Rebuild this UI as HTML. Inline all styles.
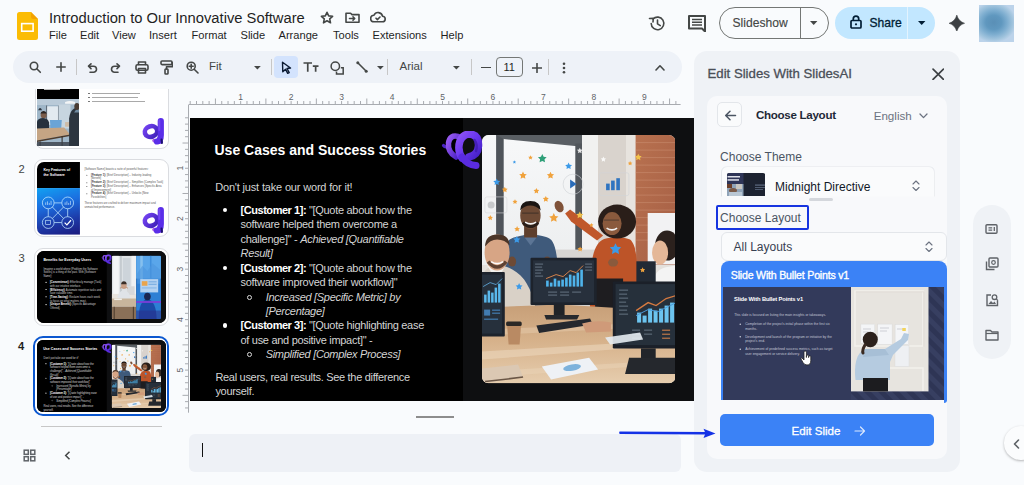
<!DOCTYPE html>
<html><head><meta charset="utf-8">
<style>
*{margin:0;padding:0;box-sizing:border-box}
html,body{width:1024px;height:485px;overflow:hidden;background:#f9fbfd;font-family:"Liberation Sans",sans-serif;color:#1f1f1f}
.a{position:absolute}
.t{position:absolute;white-space:nowrap;line-height:1}
svg{display:block;position:absolute}
.ic{stroke:#444746;fill:none;stroke-width:1.6;stroke-linecap:round;stroke-linejoin:round}
</style></head><body>
<!-- ===== TOP BAR ===== -->
<svg style="left:17px;top:12px" width="21" height="28" viewBox="0 0 21 28">
  <path d="M2.5 0H14L21 7V25.5A2.5 2.5 0 0 1 18.5 28H2.5A2.5 2.5 0 0 1 0 25.5V2.5A2.5 2.5 0 0 1 2.5 0Z" fill="#fbbc04"/>
  <path d="M14 0L21 7H16A2 2 0 0 1 14 5Z" fill="#f29900" opacity=".75"/>
  <rect x="4.7" y="11.6" width="11.4" height="7.6" fill="none" stroke="#fff" stroke-width="1.6"/>
</svg>
<div class="t" id="title" style="left:49px;top:10.5px;font-size:14.75px;color:#1f1f1f">Introduction to Our Innovative Software</div>
<div class="t" style="left:49px;top:29.5px;font-size:11.1px">File</div>
<div class="t" style="left:80px;top:29.5px;font-size:11.1px">Edit</div>
<div class="t" style="left:112px;top:29.5px;font-size:11.1px">View</div>
<div class="t" style="left:149px;top:29.5px;font-size:11.1px">Insert</div>
<div class="t" style="left:191.5px;top:29.5px;font-size:11.1px">Format</div>
<div class="t" style="left:240.5px;top:29.5px;font-size:11.1px">Slide</div>
<div class="t" style="left:278.5px;top:29.5px;font-size:11.1px">Arrange</div>
<div class="t" style="left:333px;top:29.5px;font-size:11.1px">Tools</div>
<div class="t" style="left:372.5px;top:29.5px;font-size:11.1px">Extensions</div>
<div class="t" style="left:440.5px;top:29.5px;font-size:11.1px">Help</div>
<!-- star folder cloud -->
<svg style="left:319px;top:10px" width="16" height="16" viewBox="0 0 16 16"><path class="ic" d="M8 2.3l1.7 3.6 3.9.4-2.9 2.6.8 3.9L8 10.8 4.5 12.8l.8-3.9L2.4 6.3l3.9-.4z" stroke-width="1.4"/></svg>
<svg style="left:345px;top:11px" width="15" height="13" viewBox="0 0 15 13"><path class="ic" d="M1 2.2V11.3H14V3.6H7L5.6 2.2Z" stroke-width="1.4"/><path class="ic" d="M4.5 7.5H9.5M8 5.8L9.7 7.5 8 9.2" stroke-width="1.4"/></svg>
<svg style="left:370px;top:11px" width="16" height="12" viewBox="0 0 16 12"><path class="ic" d="M4 10.8H12.3A2.8 2.8 0 0 0 12.5 5.2 4.5 4.5 0 0 0 4 4.2 3.3 3.3 0 0 0 4 10.8Z" stroke-width="1.4"/><path class="ic" d="M6 7.2L7.4 8.6 10 6" stroke-width="1.3"/></svg>
<!-- history, comment -->
<svg style="left:648px;top:14px" width="19" height="19" viewBox="0 0 19 19"><path class="ic" d="M3.2 9.5A6.3 6.3 0 1 0 5 5" stroke-width="2"/><path d="M1.5 4.5L5.3 4.2 5 8" class="ic" stroke-width="2"/><path class="ic" d="M9.5 6V9.8L12.3 11.6" stroke-width="1.8"/></svg>
<svg style="left:688px;top:15px" width="18" height="17" viewBox="0 0 18 17"><path d="M1 1H17V16.5L14 13.5H1Z" fill="none" stroke="#444746" stroke-width="2" stroke-linejoin="round"/><path d="M4 4.6H14M4 7.3H14M4 10H14" stroke="#444746" stroke-width="1.5"/></svg>
<!-- Slideshow -->
<div class="a" style="left:719px;top:7px;width:110px;height:32px;border:1px solid #747775;border-radius:16px"></div>
<div class="a" style="left:800px;top:7px;width:1px;height:32px;background:#747775"></div>
<div class="t" id="ss" style="left:732.5px;top:17.2px;font-size:12.1px;color:#444746;-webkit-text-stroke:.15px #444746">Slideshow</div>
<svg style="left:810px;top:21px" width="8" height="5" viewBox="0 0 8 5"><path d="M0 0H7.4L3.7 4Z" fill="#444746"/></svg>
<!-- Share -->
<div class="a" style="left:835px;top:7px;width:100px;height:32px;background:#c2e7ff;border-radius:16px"></div>
<div class="a" style="left:907px;top:7px;width:1px;height:32px;background:#f9fbfd;opacity:.6"></div>
<svg style="left:850px;top:15px" width="12" height="14" viewBox="0 0 12 14"><rect x="1" y="5.5" width="10" height="7.5" rx="1" fill="none" stroke="#001d35" stroke-width="1.7"/><path d="M3.3 5.5V3.8A2.7 2.7 0 0 1 8.7 3.8V5.5" fill="none" stroke="#001d35" stroke-width="1.7"/><circle cx="6" cy="9.3" r="1.1" fill="#001d35"/></svg>
<div class="t" id="share" style="left:869.5px;top:17.2px;font-size:12.1px;color:#001d35;-webkit-text-stroke:.3px #001d35">Share</div>
<svg style="left:917.5px;top:21px" width="8" height="5" viewBox="0 0 8 5"><path d="M0 0H7.4L3.7 4Z" fill="#001d35"/></svg>
<!-- gemini -->
<svg style="left:949px;top:14.6px" width="15.6" height="16.6" viewBox="0 0 15.6 16.6"><path d="M7.8 0Q9.6 6.5 15.6 8.3 9.6 10.1 7.8 16.6 6 10.1 0 8.3 6 6.5 7.8 0Z" fill="#3c4043" stroke="#3c4043" stroke-width=".5" stroke-linejoin="round"/></svg>
<!-- avatar -->
<div class="a" style="left:979px;top:5px;width:35px;height:37px;background:radial-gradient(ellipse 65% 55% at 42% 47%,#5a8fb6 0%,#6098bf 35%,#7eaed0 60%,#a3c5de 85%,#bcd3ea 100%)"></div>

<!-- ===== TOOLBAR ===== -->
<div class="a" style="left:12.5px;top:51px;width:669px;height:32px;background:#eef2f8;border-radius:16px"></div>
<svg style="left:28.5px;top:60.5px" width="13" height="13" viewBox="0 0 13 13"><circle cx="5" cy="5" r="3.7" class="ic" stroke-width="1.5"/><path class="ic" d="M7.8 7.8L11.3 11.3" stroke-width="1.7"/></svg>
<svg style="left:56px;top:62px" width="10" height="10" viewBox="0 0 10 10"><path class="ic" d="M5 .8V9.2M.8 5H9.2" stroke-width="1.7" stroke-linecap="butt"/></svg>
<div class="a" style="left:76px;top:59px;width:1px;height:16px;background:#c7c7c7"></div>
<svg style="left:86px;top:62px" width="12" height="12" viewBox="0 0 12 12"><path class="ic" d="M3.5 4.2H7.5A3 3 0 0 1 7.5 10.2H4" stroke-width="1.5"/><path class="ic" d="M5 1.8L2.5 4.2 5 6.6" stroke-width="1.5"/></svg>
<svg style="left:110px;top:62px" width="12" height="12" viewBox="0 0 12 12"><path class="ic" d="M8.5 4.2H4.5A3 3 0 0 0 4.5 10.2H8" stroke-width="1.5"/><path class="ic" d="M7 1.8L9.5 4.2 7 6.6" stroke-width="1.5"/></svg>
<svg style="left:134.5px;top:61px" width="14" height="13" viewBox="0 0 14 13"><path d="M3.5 3.5V1H10.5V3.5" class="ic" stroke-width="1.5"/><rect x="1" y="3.8" width="12" height="5.5" rx="1.5" class="ic" stroke-width="1.5"/><rect x="3.5" y="7.5" width="7" height="4.5" class="ic" fill="#edf2fa" stroke-width="1.5"/></svg>
<svg style="left:159.5px;top:60px" width="13" height="15" viewBox="0 0 13 15"><rect x="1" y="1" width="11" height="3.6" rx="1" class="ic" stroke-width="1.5"/><path class="ic" d="M12 2.8H12.3V6.8H6.5V9" stroke-width="1.5"/><rect x="5" y="9" width="3" height="5" rx=".8" class="ic" stroke-width="1.5"/></svg>
<svg style="left:185.5px;top:61px" width="13" height="13" viewBox="0 0 13 13"><circle cx="5.2" cy="5.2" r="4" class="ic" stroke-width="1.6"/><path class="ic" d="M8.2 8.2L12 12" stroke-width="1.8"/><path class="ic" d="M5.2 3.2V7.2M3.2 5.2H7.2" stroke-width="1.3"/></svg>
<div class="t" style="left:209px;top:61px;font-size:11.5px;color:#444746">Fit</div>
<svg style="left:254px;top:66px" width="7" height="4" viewBox="0 0 7 4"><path d="M0 0H6.8L3.4 3.6Z" fill="#444746"/></svg>
<div class="a" style="left:270.5px;top:59px;width:1px;height:16px;background:#c7c7c7"></div>
<div class="a" style="left:274px;top:55.5px;width:23.5px;height:22.5px;background:#d3e3fd;border-radius:4px"></div>
<svg style="left:281px;top:60.5px" width="11" height="13" viewBox="0 0 11 13"><path d="M1.5 1.2L9.5 7 6 7.5 8.2 11.6 6.7 12.3 4.6 8.3 1.8 10.8Z" fill="none" stroke="#0b1a33" stroke-width="1.4" stroke-linejoin="round"/></svg>
<svg style="left:303px;top:61.5px" width="16" height="10" viewBox="0 0 16 10"><path d="M0.5 1H9M4.75 1V9.8M9.8 4.2H15.5M12.65 4.2V9.8" stroke="#444746" stroke-width="1.7" fill="none"/></svg>
<svg style="left:329.5px;top:60.5px" width="15" height="14" viewBox="0 0 15 14"><circle cx="5.3" cy="5.3" r="4.2" fill="none" stroke="#444746" stroke-width="1.5"/><path d="M10.8 6.8H13.2V13H6.5V10.5" fill="none" stroke="#444746" stroke-width="1.5"/></svg>
<svg style="left:356px;top:60.5px" width="12" height="12" viewBox="0 0 12 12"><path d="M1.5 1.5L10.5 10.5" stroke="#444746" stroke-width="1.6"/><circle cx="1.8" cy="1.8" r="1.5" fill="#444746"/><circle cx="10.2" cy="10.2" r="1.5" fill="#444746"/></svg>
<svg style="left:376.5px;top:66px" width="7" height="4" viewBox="0 0 7 4"><path d="M0 0H6.8L3.4 3.6Z" fill="#444746"/></svg>
<div class="a" style="left:386.5px;top:59px;width:1px;height:16px;background:#c7c7c7"></div>
<div class="t" style="left:399.5px;top:61px;font-size:11.5px;color:#444746">Arial</div>
<svg style="left:452.5px;top:66px" width="7" height="4" viewBox="0 0 7 4"><path d="M0 0H6.8L3.4 3.6Z" fill="#444746"/></svg>
<div class="a" style="left:471px;top:59px;width:1px;height:16px;background:#c7c7c7"></div>
<div class="a" style="left:481px;top:66.5px;width:9.5px;height:1.6px;background:#444746"></div>
<div class="a" style="left:496px;top:57px;width:27px;height:19.5px;border:1px solid #747775;border-radius:4px"></div>
<div class="t" style="left:503.5px;top:61.5px;font-size:11px;color:#1f1f1f">11</div>
<svg style="left:531.5px;top:63px" width="10" height="10" viewBox="0 0 10 10"><path class="ic" d="M5 .5V9.5M.5 5H9.5" stroke-width="1.6" stroke-linecap="butt"/></svg>
<div class="a" style="left:548px;top:59px;width:1px;height:16px;background:#c7c7c7"></div>
<svg style="left:561.5px;top:62px" width="4" height="12" viewBox="0 0 4 12"><circle cx="2" cy="1.8" r="1.3" fill="#444746"/><circle cx="2" cy="6" r="1.3" fill="#444746"/><circle cx="2" cy="10.2" r="1.3" fill="#444746"/></svg>
<svg style="left:654.5px;top:64px" width="10" height="7" viewBox="0 0 10 7"><path class="ic" d="M1 6L5 1.8 9 6" stroke-width="1.6"/></svg>

<!-- ===== FILMSTRIP ===== -->
<div class="a" style="left:0;top:88.5px;width:180px;height:330px;overflow:hidden">
 <!-- slide 1 -->
 <div class="a" style="left:34.8px;top:-30px;width:134px;height:90px;border:1px solid #dadce0;border-radius:8px;background:#fff"></div>
 <div class="a" style="left:36.9px;top:0;width:42.6px;height:10px;background:#000"></div>
 <div class="a" style="left:43.9px;top:0;width:16.5px;height:1.6px;background:#bbb"></div>
 <svg style="left:36.9px;top:10px" width="42.6" height="47" viewBox="36.9 98.5 42.6 47">
  <rect x="36.9" y="98.5" width="42.6" height="47" fill="#9fb6c8"/>
  <rect x="36.9" y="98.5" width="42.6" height="6" fill="#b9cad8"/>
  <rect x="46.5" y="105.8" width="12" height="18.5" fill="#e2eaf0"/>
  <path d="M46.5 105V128M58.4 105V128" stroke="#3f4a55" stroke-width=".8"/>
  <rect x="58.4" y="104" width="12" height="24" fill="#c7d5df"/>
  <path d="M65 101.5Q70 99.5 75 101.5V103.2H65Z" fill="#f3f5f6"/>
  <path d="M38 109.7Q40 105.5 42 109.7Z" fill="#2c3540"/>
  <ellipse cx="43.5" cy="114.4" rx="3" ry="3.4" fill="#7a5c4a"/>
  <path d="M40.3 113Q41 110.5 43.5 110.5 46 110.5 46.6 113Z" fill="#2a2523"/>
  <path d="M36.9 130V121Q38 117.5 43 117.5 48 118 49 122V131Z" fill="#27313d"/>
  <path d="M49.8 119.6H61.7L61 129.5H50.5Z" fill="#6aa4d6"/>
  <rect x="65" y="121.6" width="6.6" height="4.6" fill="#cdbba6"/>
  <path d="M36.9 128L64 127 70 134 36.9 140Z" fill="#c5a584"/>
  <path d="M36.9 140L70 134V135.5L36.9 141.5Z" fill="#4d3b2c"/>
  <path d="M40 141V145.4M62 136V145.4" stroke="#2c2520" stroke-width="1"/>
  <path d="M36.9 141.5H79.5V145.4H36.9Z" fill="#3a4048" opacity=".8"/>
  <path d="M69 145.4V118Q70 110 74 108 79.5 106 79.5 110V145.4Z" fill="#2c353f"/><path d="M74 112L79.5 104V112Z" fill="#6f8aa0"/>
  <ellipse cx="76.8" cy="106" rx="2.6" ry="3.5" fill="#4a3c33"/>
 </svg>
<svg style="left:138px;top:23.5px" width="32" height="38" viewBox="138 112 32 38"><defs><linearGradient id="tl" x1="0" y1="0" x2="1" y2="1"><stop offset="0" stop-color="#7443f2"/><stop offset="1" stop-color="#3d1fb6"/></linearGradient></defs><path d="M154 140.5Q158 143.5 161 141.5" stroke="#a45ae6" stroke-width="3.6" fill="none" stroke-linecap="round"/><ellipse cx="151" cy="131.5" rx="6.3" ry="5.2" transform="rotate(-18 151 131.5)" fill="none" stroke="url(#tl)" stroke-width="4.6"/><path d="M160.8 121V135Q160.8 141 157 141.5" stroke="#5a2ee8" stroke-width="6.2" fill="none" stroke-linecap="round"/><path d="M159.3 120.5V130" stroke="#7b4ff4" stroke-width="2" stroke-linecap="round" opacity=".8"/><path d="M161.5 139.5L162 143" stroke="#1c1170" stroke-width="2" stroke-linecap="round"/></svg>
 <div class="a" style="left:88px;top:4.2px;width:1.6px;height:1.6px;background:#777"></div><div class="a" style="left:92px;top:4.5px;width:48px;height:1px;background:#a9a9a9"></div>
 <div class="a" style="left:88px;top:8.1px;width:1.6px;height:1.6px;background:#777"></div><div class="a" style="left:92px;top:8.4px;width:46px;height:1px;background:#a9a9a9"></div>
 <div class="a" style="left:88px;top:12px;width:1.6px;height:1.6px;background:#777"></div><div class="a" style="left:92px;top:12.3px;width:53px;height:1px;background:#a9a9a9"></div>
 <!-- slide 2 -->
 <div class="t" style="left:18.5px;top:75.6px;font-size:11.2px;color:#444746">2</div>
 <div class="a" style="left:34.3px;top:70.7px;width:134.5px;height:78px;border:1px solid #dadce0;border-radius:9px;background:#fff"></div>
 <div class="a" style="left:37.2px;top:73.6px;width:128.8px;height:72.5px;border-radius:7px;background:#fff;overflow:hidden">
  <div class="a" style="left:0;top:0;width:504px;height:283.7px;transform:scale(.2556);transform-origin:0 0;background:#fff">
<div class="a" style="left:0;top:0;width:167.5px;height:101.7px;background:#000"></div>
<div class="a" style="left:0;top:101.7px;width:167.5px;height:182px;background:linear-gradient(165deg,#12a2f2 0%,#1b6fe0 35%,#1d3aa8 70%,#1b1a7e 100%)"></div>
<svg style="left:0;top:101.7px" width="167.5" height="182" viewBox="0 0 167.5 182"><g fill="none" stroke="#bfe6ff" stroke-width="3"><circle cx="44" cy="58" r="23"/><circle cx="120" cy="58" r="23"/><circle cx="44" cy="135" r="23"/><circle cx="120" cy="135" r="23"/><path d="M67 58H97M67 135H97M44 81V112M120 81V112M60 74L104 119M104 74L60 119"/></g><path d="M108 135L117 144 133 126" stroke="#fff" stroke-width="5" fill="none"/><g stroke="#cfeaff" stroke-width="2.5" fill="none"><path d="M34 66V56M41 66V52M48 66V58M55 66V50"/><path d="M110 66V56M117 66V52M124 66V58M131 66V50"/><rect x="34" y="126" width="19" height="17"/></g></svg>
<div class="t" style="left:25.0px;top:24.15px;font-size:14.0px;color:#fff;font-weight:bold">Key Features of</div>
<div class="t" style="left:25.0px;top:43.15px;font-size:14.0px;color:#fff;font-weight:bold">the Software</div>
<div class="t" style="left:185.4px;top:23.86px;font-size:10.8px;color:#5a5a5a;">[Software Name] boasts a suite of powerful features:</div>
<div class="t" style="left:211.3px;top:45.36px;font-size:10.8px;color:#5a5a5a;"><b style="color:#333">[Feature 1]:</b> [Brief Description] – Industry-leading</div>
<div class="a" style="left:193px;top:49.5px;width:4px;height:4px;border-radius:50%;background:#555"></div>
<div class="t" style="left:211.3px;top:59.46px;font-size:10.8px;color:#5a5a5a;">[Benefit]</div>
<div class="t" style="left:211.3px;top:74.36px;font-size:10.8px;color:#5a5a5a;"><b style="color:#333">[Feature 2]:</b> [Brief Description] – Simplifies [Complex Task]</div>
<div class="a" style="left:193px;top:78.5px;width:4px;height:4px;border-radius:50%;background:#555"></div>
<div class="t" style="left:211.3px;top:89.56px;font-size:10.8px;color:#5a5a5a;"><b style="color:#333">[Feature 3]:</b> [Brief Description] – Enhances [Specific Area</div>
<div class="a" style="left:193px;top:93.7px;width:4px;height:4px;border-radius:50%;background:#555"></div>
<div class="t" style="left:211.3px;top:103.26px;font-size:10.8px;color:#5a5a5a;">of Improvement]</div>
<div class="t" style="left:211.3px;top:117.36px;font-size:10.8px;color:#5a5a5a;"><b style="color:#333">[Feature 4]:</b> [Brief Description] – Unlocks [New</div>
<div class="a" style="left:193px;top:121.5px;width:4px;height:4px;border-radius:50%;background:#555"></div>
<div class="t" style="left:211.3px;top:132.16px;font-size:10.8px;color:#5a5a5a;">Possibilities]</div>
<div class="t" style="left:185.4px;top:154.06px;font-size:10.8px;color:#5a5a5a;">These features are crafted to deliver maximum impact and</div>
<div class="t" style="left:185.4px;top:169.76px;font-size:10.8px;color:#5a5a5a;">unmatched performance.</div>
  </div>
 </div>
<svg style="left:138px;top:112.7px" width="32" height="38" viewBox="138 112 32 38"><path d="M154 140.5Q158 143.5 161 141.5" stroke="#a45ae6" stroke-width="3.6" fill="none" stroke-linecap="round"/><ellipse cx="151" cy="131.5" rx="6.3" ry="5.2" transform="rotate(-18 151 131.5)" fill="none" stroke="url(#tl)" stroke-width="4.6"/><path d="M160.8 121V135Q160.8 141 157 141.5" stroke="#5a2ee8" stroke-width="6.2" fill="none" stroke-linecap="round"/><path d="M159.3 120.5V130" stroke="#7b4ff4" stroke-width="2" stroke-linecap="round" opacity=".8"/><path d="M161.5 139.5L162 143" stroke="#1c1170" stroke-width="2" stroke-linecap="round"/></svg>
 <!-- slide 3 -->
 <div class="t" style="left:18.5px;top:164.6px;font-size:11.2px;color:#444746">3</div>
 <div class="a" style="left:34.3px;top:159.7px;width:134.5px;height:78px;border:1px solid #dadce0;border-radius:9px;background:#fff"></div>
 <div class="a" style="left:37.2px;top:162.9px;width:128.8px;height:71.8px;border-radius:7px;background:#000;overflow:hidden">
  <div class="a" style="left:0;top:0;width:504px;height:283.7px;transform:scale(.2556);transform-origin:0 0;background:#000">
<div class="a" style="left:273.4px;top:0;width:230.6px;height:283.7px;background:#0e0f11"></div>
<div class="t" style="left:25.2px;top:25.65px;font-size:14.0px;color:#fff;font-weight:bold">Benefits for Everyday Users</div>
<div class="t" style="left:25.2px;top:64.61px;font-size:10.5px;color:#cfcfcf;">Imagine a world where [Problem the Software</div>
<div class="t" style="left:25.2px;top:78.91px;font-size:10.5px;color:#cfcfcf;">Solves] is a thing of the past. With [Software</div>
<div class="t" style="left:25.2px;top:93.51px;font-size:10.5px;color:#cfcfcf;">Name]:</div>
<div class="t" style="left:50.5px;top:117.11px;font-size:10.5px;color:#cfcfcf;"><b style="color:#fff">[Convenience]:</b> Effortlessly manage [Task]</div>
<div class="a" style="left:33px;top:120.0px;width:4.6px;height:4.6px;border-radius:50%;background:#fff"></div>
<div class="t" style="left:50.5px;top:130.61px;font-size:10.5px;color:#cfcfcf;">with our intuitive interface.</div>
<div class="t" style="left:50.5px;top:145.81px;font-size:10.5px;color:#cfcfcf;"><b style="color:#fff">[Efficiency]:</b> Automate repetitive tasks and</div>
<div class="a" style="left:33px;top:148.7px;width:4.6px;height:4.6px;border-radius:50%;background:#fff"></div>
<div class="t" style="left:50.5px;top:159.91px;font-size:10.5px;color:#cfcfcf;">save valuable time.</div>
<div class="t" style="left:50.5px;top:173.61px;font-size:10.5px;color:#cfcfcf;"><b style="color:#fff">[Time-Saving]:</b> Reclaim hours each week</div>
<div class="a" style="left:33px;top:176.5px;width:4.6px;height:4.6px;border-radius:50%;background:#fff"></div>
<div class="t" style="left:50.5px;top:188.91px;font-size:10.5px;color:#cfcfcf;">to focus on what matters most.</div>
<div class="t" style="left:50.5px;top:204.11px;font-size:10.5px;color:#cfcfcf;"><b style="color:#fff">[Unique Benefit]:</b> [Specific Advantage</div>
<div class="a" style="left:33px;top:207.0px;width:4.6px;height:4.6px;border-radius:50%;background:#fff"></div>
<div class="t" style="left:50.5px;top:219.11px;font-size:10.5px;color:#cfcfcf;">Offered].</div>
<svg style="left:291.9px;top:17.6px" width="193.4" height="248.2" viewBox="0 0 193.4 248.2">
 <defs><clipPath id="pc3"><rect width="193.4" height="248.2" rx="6.5"/></clipPath></defs>
 <g clip-path="url(#pc3)">
  <rect width="96" height="248.2" fill="#dfe3e6"/>
  <rect x="6" y="0" width="22" height="160" fill="#f4f6f7"/>
  <rect x="34" y="0" width="5" height="170" fill="#b9c0c6"/>
  <rect x="44" y="10" width="30" height="110" fill="#cdd4da"/>
  <rect x="78" y="0" width="18" height="150" fill="#eef0f2"/>
  <rect x="0" y="150" width="96" height="20" fill="#e8e4de"/>
  <rect x="60" y="120" width="30" height="34" fill="#d6d8da"/>
  <path d="M22 175Q22 140 48 136 74 140 74 175Z" fill="#dfe3e8"/>
  <ellipse cx="48" cy="118" rx="11" ry="13" fill="#caa088"/>
  <path d="M37 112Q38 100 48 100 58 100 59 112Z" fill="#3a2e28"/>
  <path d="M33 128Q40 120 45 126M63 128Q56 120 51 126" stroke="#c39a80" stroke-width="4" fill="none"/>
  <path d="M0 168H96V200H0Z" fill="#c8b59c"/>
  <path d="M0 200H96V248H0Z" fill="#8a7058"/>
  <path d="M10 200V248M85 200V248" stroke="#4a3a2c" stroke-width="4"/>
  <rect x="10" y="168" width="30" height="6" fill="#f1efe9"/>
  <rect x="96" y="0" width="97.4" height="248.2" fill="#2d7fd4"/>
  <rect x="96" y="0" width="97.4" height="90" fill="#5aa6ea"/>
  <rect x="112" y="0" width="10" height="110" fill="#86c0ee"/>
  <rect x="150" y="0" width="6" height="90" fill="#3f8fdc"/>
  <path d="M100 70L120 40 140 60 160 30 190 55V110H100Z" fill="#4c96dd" opacity=".6"/>
  <rect x="112" y="92" width="70" height="52" fill="#b4d2f1"/>
  <rect x="118" y="100" width="22" height="18" fill="#e9a44c"/>
  <rect x="144" y="100" width="32" height="5" fill="#7fb1e3"/>
  <rect x="144" y="110" width="32" height="5" fill="#7fb1e3"/>
  <rect x="118" y="124" width="58" height="5" fill="#8cbbe9"/>
  <path d="M106 248Q106 176 140 170 174 176 176 248Z" fill="#1c4ba8"/>
  <ellipse cx="140" cy="160" rx="13" ry="15" fill="#1a2550"/>
  <rect x="96" y="178" width="97.4" height="7" fill="#7b3fd8"/>
  <rect x="96" y="215" width="97.4" height="33" fill="#2a2f8a" opacity=".55"/>
 </g>
</svg>
<!-- purple logo -->
<svg style="left:251px;top:13.2px" width="42" height="40" viewBox="441 131 42 40">
 <defs>
  <linearGradient id="pl" x1="0" y1="0" x2="1" y2="1"><stop offset="0" stop-color="#8d52f7"/><stop offset=".5" stop-color="#6936ee"/><stop offset="1" stop-color="#4320c4"/></linearGradient>
  <linearGradient id="pl2" x1="0" y1="0" x2="1" y2="1"><stop offset="0" stop-color="#9a5cf2"/><stop offset="1" stop-color="#4a22c2"/></linearGradient>
 </defs>
 <path d="M443.5 145.5Q445 147.5 447.5 146.5" stroke="#4b24c4" stroke-width="3.2" stroke-linecap="round" fill="none"/>
 <path d="M458 136.5Q450 134.5 448.5 143 447.5 152 456 157" stroke="url(#pl2)" stroke-width="5.5" stroke-linecap="round" fill="none"/>
 <path d="M462 158Q457 150 460 141 463 134 470 134 479 135 478.5 146 478 155 469 157" stroke="url(#pl)" stroke-width="7.5" stroke-linecap="round" fill="none"/>
 <path d="M462 157Q467 165 476 165.5" stroke="#5a2ce0" stroke-width="7" stroke-linecap="round" fill="none"/>
 <path d="M474.5 140Q478 145 476 151" stroke="#3b1aa8" stroke-width="2.5" stroke-linecap="round" fill="none" opacity=".7"/>
</svg>

  </div>
 </div>
 <!-- slide 4 -->
 <div class="t" style="left:18px;top:252.5px;font-size:11.2px;color:#1f1f1f;font-weight:bold">4</div>
 <div class="a" style="left:33.3px;top:247.9px;width:136.1px;height:79.6px;border:2.6px solid #0b57d0;border-radius:10px;background:#fff"></div>
 <div class="a" style="left:37.2px;top:251.8px;width:128.8px;height:71.9px;border-radius:6px;background:#000;overflow:hidden">
  <div class="a" style="left:0;top:0;width:504px;height:283.7px;transform:scale(.2556);transform-origin:0 0;background:#000">
  <div class="a" style="left:273.4px;top:0;width:230.6px;height:283.7px;background:#0e0f11"></div>
<div class="t" style="left:24.5px;top:25.65px;font-size:14.0px;color:#fff;font-weight:bold">Use Cases and Success Stories</div>
<div class="t" style="left:25.2px;top:64.29px;font-size:11.0px;color:#d4d4d4;letter-spacing:-0.17px">Don't just take our word for it!</div>
<div class="t" style="left:50.5px;top:87.09px;font-size:11.0px;color:#d4d4d4;letter-spacing:-0.3px"><b style="color:#fff;letter-spacing:-.45px">[Customer 1]:</b> "[Quote about how the</div>
<div class="a" style="left:32.9px;top:90.1px;width:4.6px;height:4.6px;border-radius:50%;background:#fff"></div>
<div class="t" style="left:50.5px;top:101.39px;font-size:11.0px;color:#d4d4d4;letter-spacing:-0.3px">software helped them overcome a</div>
<div class="t" style="left:50.5px;top:115.89px;font-size:11.0px;color:#d4d4d4;letter-spacing:-0.3px">challenge]" - <i>Achieved [Quantifiable</i></div>
<div class="t" style="left:50.5px;top:129.99px;font-size:11.0px;color:#d4d4d4;letter-spacing:-0.3px"><i>Result]</i></div>
<div class="t" style="left:50.5px;top:144.79px;font-size:11.0px;color:#d4d4d4;letter-spacing:-0.3px"><b style="color:#fff;letter-spacing:-.45px">[Customer 2]:</b> "[Quote about how the</div>
<div class="a" style="left:32.9px;top:147.8px;width:4.6px;height:4.6px;border-radius:50%;background:#fff"></div>
<div class="t" style="left:50.5px;top:159.19px;font-size:11.0px;color:#d4d4d4;letter-spacing:-0.3px">software improved their workflow]"</div>
<div class="t" style="left:75.7px;top:173.89px;font-size:11.0px;color:#d4d4d4;letter-spacing:-0.3px"><i>Increased [Specific Metric] by</i></div>
<div class="a" style="left:57.1px;top:177.0px;width:4.8px;height:4.8px;border-radius:50%;border:1px solid #ddd"></div>
<div class="t" style="left:75.7px;top:188.29px;font-size:11.0px;color:#d4d4d4;letter-spacing:-0.3px"><i>[Percentage]</i></div>
<div class="t" style="left:50.5px;top:202.39px;font-size:11.0px;color:#d4d4d4;letter-spacing:-0.3px"><b style="color:#fff;letter-spacing:-.45px">[Customer 3]:</b> "[Quote highlighting ease</div>
<div class="a" style="left:32.9px;top:205.4px;width:4.6px;height:4.6px;border-radius:50%;background:#fff"></div>
<div class="t" style="left:50.5px;top:216.79px;font-size:11.0px;color:#d4d4d4;letter-spacing:-0.3px">of use and positive impact]" -</div>
<div class="t" style="left:75.7px;top:231.59px;font-size:11.0px;color:#d4d4d4;letter-spacing:-0.3px"><i>Simplified [Complex Process]</i></div>
<div class="a" style="left:57.1px;top:234.7px;width:4.8px;height:4.8px;border-radius:50%;border:1px solid #ddd"></div>
<div class="t" style="left:25.4px;top:254.39px;font-size:11.0px;color:#d4d4d4;letter-spacing:-0.3px">Real users, real results. See the difference</div>
<div class="t" style="left:25.4px;top:268.69px;font-size:11.0px;color:#d4d4d4;letter-spacing:-0.3px">yourself.</div>
<!-- ===== PHOTO ===== -->
<svg style="left:291.9px;top:17.6px" width="193.4" height="248.2" viewBox="481.9 135.4 193.4 248.2">
<defs>
 <clipPath id="pc"><rect x="481.9" y="135.4" width="193.4" height="248.2" rx="6.5"/></clipPath>
 <linearGradient id="wood" x1="0" y1="0" x2="0" y2="1"><stop offset="0" stop-color="#c79f78"/><stop offset=".45" stop-color="#d6b18a"/><stop offset="1" stop-color="#e6cdae"/></linearGradient>
 <linearGradient id="brick" x1="0" y1="0" x2="1" y2="1"><stop offset="0" stop-color="#b8714f"/><stop offset="1" stop-color="#a65f45"/></linearGradient>
 <linearGradient id="win" x1="0" y1="0" x2="0" y2="1"><stop offset="0" stop-color="#f7f8f9"/><stop offset="1" stop-color="#eceeef"/></linearGradient>
 <path id="s5" d="M0 -1L.29 -.4.95 -.31.48 .15.59 .81 0 .5-.59 .81-.48 .15-.95-.31-.29-.4Z"/>
</defs>
<g clip-path="url(#pc)">
 <rect x="481.9" y="135.4" width="193.4" height="248.2" fill="#e3e0dc"/>
 <!-- window -->
 <rect x="481.9" y="135.4" width="100" height="130" fill="url(#win)"/>
 <path d="M496 135.4H503.6V262H496Z" fill="#4f545a"/>
 <path d="M496 135.4H582V147L575 146.4 503.6 139.5Z" fill="#5a5f64"/>
 <path d="M575.2 144H581.9V262H575.2Z" fill="#51565b"/>
 <rect x="581.9" y="135.4" width="16" height="130" fill="#f1f1f0"/>
 <rect x="597.9" y="135.4" width="28" height="130" fill="#d9d3cd"/>
 <rect x="625.9" y="135.4" width="10" height="130" fill="#e7e3de"/>
 <!-- brick -->
 <rect x="635.5" y="135.4" width="40" height="130" fill="url(#brick)"/>
 <g stroke="#d9a187" stroke-width=".6" opacity=".6">
  <path d="M635.5 143H676M635.5 150.5H676M635.5 158H676M635.5 165.5H676M635.5 173H676M635.5 180.5H676M635.5 188H676M635.5 195.5H676M635.5 203H676M635.5 210.5H676M635.5 218H676M635.5 225.5H676M635.5 233H676M635.5 240.5H676"/>
 </g>
 <path d="M647.6 213.4H676V265H647.6Z" fill="#f2f2f3"/>
 <!-- widgets -->
 <rect x="484.8" y="197.3" width="22" height="16" rx="2" fill="none" stroke="#d6d8da" stroke-width=".6"/>
 <circle cx="491" cy="205.3" r="3.5" fill="#c8cacc"/>
 <circle cx="573" cy="184.6" r="10" fill="none" stroke="#cfd2d5" stroke-width=".6"/>
 <path d="M570 180V189L576.5 184.5Z" fill="#2a6cb8"/>
 <rect x="599.3" y="173.2" width="29.5" height="22.8" rx="2" fill="none" stroke="#d0d3d6" stroke-width=".6"/>
 <g fill="#2f74c0"><rect x="606" y="184" width="3.6" height="6.6"/><rect x="611" y="181" width="3.6" height="9.6"/><rect x="616.2" y="178.6" width="3.6" height="12"/></g>
 <!-- behind people zone -->
 <rect x="503" y="250" width="133" height="60" fill="#d8d6d3"/>
 <!-- blue man -->
 <path d="M500 310C500 250 503 240 516 237.5 526 234 536 234 546 237.5 556 240 558 252 560 310Z" fill="#3f5a7b"/>
 <path d="M523 236L530.5 246 538 236Z" fill="#5c7595"/>
 <path d="M524 226H537V238H524Z" fill="#5e3f2d"/>
 <ellipse cx="530.3" cy="216" rx="10.2" ry="13.5" fill="#6d4a35"/>
 <path d="M520 211Q520 201.4 530.3 201.4 540.6 201.4 540.6 211Q536 206 530.3 206 524.5 206 520 211Z" fill="#1b1614"/>
 <path d="M522 213.5H538.5" stroke="#1e1e1e" stroke-width=".7" opacity=".8"/>
 <path d="M523 223Q530 231 538 223" stroke="#2a1e18" stroke-width="3" fill="none"/>
 <path d="M525 222.5Q530.5 226 536 222.5" stroke="#f2f2f2" stroke-width="1.6" fill="none"/>
 <ellipse cx="512" cy="262" rx="4" ry="5" fill="#6d4a35"/>
 <ellipse cx="547" cy="262" rx="4" ry="5" fill="#6d4a35"/>
 <!-- orange woman -->
 <path d="M590 320C589 262 592 245 604 239.5 612 237 622 237 630 240 637 246 638 262 638 320Z" fill="#bd5428"/>
 <path d="M597 241L571 222 565 214 570 210 578 216 603 236Z" fill="#c0582b"/>
 <ellipse cx="559" cy="207" rx="4.2" ry="6" fill="#7f5239" transform="rotate(-25 559 207)"/>
 <path d="M595 279H623V310H595Z" fill="#1e1d20"/>
 <ellipse cx="617" cy="222" rx="19" ry="17" fill="#2a1e19"/>
 <ellipse cx="612" cy="224" rx="9.5" ry="11.5" fill="#8a5a3d"/>
 <path d="M604 220.5H619" stroke="#2a2a2a" stroke-width=".7" opacity=".8"/>
 <path d="M606.5 228.5Q612 232 617 228.5" stroke="#f2f2f2" stroke-width="1.6" fill="none"/>
 <ellipse cx="613" cy="263" rx="5" ry="4" fill="#8a5a3d"/>
 <!-- right woman -->
 <path d="M652 300C652 272 656 268 676 266V300Z" fill="#f3f3f3"/>
 <ellipse cx="667" cy="246" rx="12" ry="15" fill="#2b211d"/>
 <ellipse cx="660" cy="253" rx="8" ry="12" fill="#e4b797"/>
 <!-- left man -->
 <path d="M476 330C476 282 482 268 494 266 504 264 516 270 524 280 532 292 537 305 537 330Z" fill="#d9d1c7"/>
 <path d="M487 266L497 282 505 266Z" fill="#f3f1ee"/>
 <ellipse cx="497" cy="253" rx="12.5" ry="18" fill="#d7a585"/>
 <path d="M485 247Q485 234.9 497.5 234.9 509 234.9 509.5 246Q505 240 497 240 490 240 485 247Z" fill="#4b3528"/>
 <path d="M488 262Q497 273 506 262" stroke="#5e4232" stroke-width="3.5" fill="none"/>
 <path d="M491 262Q497 266 503 262" stroke="#fbfbfb" stroke-width="1.7" fill="none"/>
 <ellipse cx="519" cy="312" rx="9" ry="5" fill="#d29c7c"/>
 <!-- table -->
 <path d="M481.9 308L560 305 676 312V383.6H481.9Z" fill="url(#wood)"/>
 <path d="M481.9 330L676 322V326L481.9 336Z" fill="#e2c7a6" opacity=".6"/>
 <path d="M481.9 352L676 340V345L481.9 360Z" fill="#ecd8bf" opacity=".55"/>
 <path d="M481.9 372L676 360V364L481.9 378Z" fill="#e9d3b8" opacity=".5"/>
 <!-- center monitor -->
 <rect x="530.4" y="258.2" width="66.2" height="47.2" rx="1" fill="#1d232c"/>
 <rect x="533" y="260.8" width="61" height="42" fill="#27303c"/>
 <g fill="#8fa0b0" opacity=".6"><rect x="535" y="264" width="8" height="1"/><rect x="535" y="267" width="7" height="1"/><rect x="535" y="270" width="8" height="1"/><rect x="535" y="273" width="6" height="1"/><rect x="535" y="276" width="8" height="1"/><rect x="585" y="264" width="7" height="1"/><rect x="585" y="267" width="7" height="1"/><rect x="585" y="270" width="7" height="1"/><rect x="548" y="292" width="9" height="1"/><rect x="560" y="292" width="9" height="1"/><rect x="572" y="292" width="9" height="1"/><rect x="548" y="295" width="9" height="1"/><rect x="560" y="295" width="9" height="1"/></g>
 <g fill="#4fb3ea"><rect x="546" y="281" width="2.6" height="6"/><rect x="549.8" y="283" width="2.6" height="4"/><rect x="553.6" y="279" width="2.6" height="8"/><rect x="557.4" y="281" width="2.6" height="6"/><rect x="561.2" y="280" width="2.6" height="7"/><rect x="565" y="278" width="2.6" height="9"/><rect x="568.8" y="275" width="2.6" height="12"/><rect x="572.6" y="276" width="2.6" height="11"/><rect x="576.4" y="273" width="2.6" height="14"/><rect x="580.2" y="270" width="2.6" height="17"/></g>
 <path d="M546 279L556 275 563 277 570 271 576 273 583 266" stroke="#d4824a" stroke-width="1" fill="none"/>
 <rect x="553.7" y="305" width="10.8" height="11" fill="#202327"/>
 <path d="M544.3 315.3H579.2L577 320H546Z" fill="#26292e"/>
 <!-- keyboard -->
 <path d="M536.3 326L590 319 592.6 325 539 333.3Z" fill="#25282e"/>
 <path d="M582 324Q596 320 611 323L611 332 586 333Z" fill="#cf9a79"/>
 <!-- small monitor -->
 <rect x="636.3" y="261.7" width="19.3" height="21.5" fill="#222a35"/>
 <!-- left monitor -->
 <rect x="478" y="272.4" width="26.7" height="64.4" rx="1" fill="#1d232c"/>
 <rect x="481" y="275" width="21" height="59" fill="#26303c"/>
 <g fill="#5ab8ec"><rect x="484" y="295" width="2.5" height="8"/><rect x="487.5" y="291" width="2.5" height="12"/><rect x="491" y="293" width="2.5" height="10"/><rect x="494.5" y="288" width="2.5" height="15"/><rect x="498" y="284" width="2.5" height="19"/></g>
 <path d="M483 287L490 283 496 285 502 279" stroke="#5aa0d0" stroke-width=".9" fill="none"/>
 <g fill="#4a8fd0" opacity=".8"><rect x="484" y="310" width="6" height="6"/><rect x="492" y="310" width="8" height="1.2"/><rect x="492" y="313" width="8" height="1.2"/><rect x="484" y="319" width="14" height="1.2"/></g>
 <!-- coffee -->
 <path d="M507 325H521L519.5 344.8H508.5Z" fill="#b98a63"/>
 <rect x="506" y="322" width="15.6" height="4.5" rx="1.5" fill="#2b2826"/>
 <!-- right monitor -->
 <rect x="612.7" y="281.8" width="64" height="67" rx="1.2" fill="#1b2029"/>
 <rect x="615.5" y="284.5" width="60" height="61" fill="#26303b"/>
 <g fill="#8fa0b0" opacity=".55"><rect x="619" y="290" width="9" height="1.1"/><rect x="619" y="294" width="8" height="1.1"/><rect x="619" y="298" width="9" height="1.1"/><rect x="619" y="302" width="7" height="1.1"/><rect x="619" y="306" width="9" height="1.1"/><rect x="619" y="310" width="8" height="1.1"/><rect x="619" y="314" width="9" height="1.1"/><rect x="632" y="330" width="8" height="1.1"/><rect x="644" y="330" width="8" height="1.1"/><rect x="632" y="334" width="8" height="1.1"/><rect x="644" y="334" width="8" height="1.1"/><rect x="632" y="338" width="8" height="1.1"/></g>
 <g fill="#d4824a" opacity=".8"><rect x="662" y="330" width="8" height="1.3"/><rect x="662" y="334" width="8" height="1.3"/><rect x="662" y="338" width="8" height="1.3"/></g>
 <g fill="#6cc4ef"><rect x="637" y="313" width="4" height="10"/><rect x="642.5" y="316" width="4" height="7"/><rect x="648" y="309" width="4" height="14"/><rect x="653.5" y="311" width="4" height="12"/><rect x="659" y="309" width="4" height="14"/><rect x="664.5" y="306" width="4" height="17"/><rect x="670" y="303" width="4" height="20"/></g>
 <path d="M636 311L648 303 656 306 666 299 676 296" stroke="#d67a40" stroke-width="1.3" fill="none"/>
 <path d="M636 316L648 310 658 312 676 303" stroke="#4a9ad8" stroke-width="1" fill="none"/>
 <rect x="640.9" y="348.8" width="14.7" height="12" fill="#22252a"/>
 <path d="M629 358.2H676V374.3H625Z" fill="#25282d"/>
 <!-- papers -->
 <path d="M541.7 367L589 358.2 598 370 551 380Z" fill="#eef1f5"/>
 <ellipse cx="572" cy="368" rx="9" ry="3.2" fill="#7db2dc" transform="rotate(-10 572 368)"/>
 <path d="M605 338L640 333 643 340 610 345Z" fill="#e6ecf2" opacity=".9"/>
 <path d="M481.9 369L518 365 523 378 481.9 383.6Z" fill="#dbc8b3"/>
 <path d="M485 382L523 377.5" stroke="#6a5646" stroke-width="1.5"/>
 <!-- stars -->
 <g fill="#f0a23c">
  <use href="#s5" transform="translate(522.9 175.9) scale(4)"/>
  <use href="#s5" transform="translate(550.4 175.9) scale(3.8)"/>
  <use href="#s5" transform="translate(553.7 218.3) scale(4.8)"/>
  <use href="#s5" transform="translate(545.7 199.5) scale(3.2)"/>
  <use href="#s5" transform="translate(536.3 191.4) scale(3)"/>
  <use href="#s5" transform="translate(504.7 190.1) scale(3)"/>
  <use href="#s5" transform="translate(514.9 202.2) scale(2.6)"/>
  <use href="#s5" transform="translate(490.2 218.3) scale(2.8)"/>
  <use href="#s5" transform="translate(517 229.5) scale(3)"/>
  <use href="#s5" transform="translate(530.4 158) scale(2.4)"/>
  <use href="#s5" transform="translate(591.3 225.5) scale(2.2)"/>
  <use href="#s5" transform="translate(580 249.6) scale(2.8)"/>
  <use href="#s5" transform="translate(630 163.8) scale(2.4)"/>
 </g>
 <g fill="#f2c24a"><use href="#s5" transform="translate(579.7 215.6) scale(3.8)"/><use href="#s5" transform="translate(638.2 157.7) scale(3.6)"/><use href="#s5" transform="translate(521 360) scale(0)"/></g>
 <g fill="#2e9f78"><use href="#s5" transform="translate(542.2 159) scale(4.6)"/></g>
 <g fill="#3c9ae8">
  <use href="#s5" transform="translate(568.5 166.5) scale(3.6)"/>
  <use href="#s5" transform="translate(496.6 182.6) scale(3.6)"/>
  <use href="#s5" transform="translate(516.7 240.2) scale(3.8)"/>
  <use href="#s5" transform="translate(615.4 249.6) scale(6)"/>
  <use href="#s5" transform="translate(514.3 162.5) scale(1.8)"/>
  <use href="#s5" transform="translate(519 287) scale(3.6)"/>
 </g>
 <g fill="#ffffff" opacity=".85"><use href="#s5" transform="translate(603.3 159.8) scale(2.8)"/><use href="#s5" transform="translate(579.7 151.2) scale(3)"/></g>
 <g fill="#f0a23c"><use href="#s5" transform="translate(642.5 270.5) scale(2.8)"/></g>
</g>
</svg>
<!-- purple logo -->
<svg style="left:251px;top:13.2px" width="42" height="40" viewBox="441 131 42 40">
 <defs>
  <linearGradient id="pl" x1="0" y1="0" x2="1" y2="1"><stop offset="0" stop-color="#8d52f7"/><stop offset=".5" stop-color="#6936ee"/><stop offset="1" stop-color="#4320c4"/></linearGradient>
  <linearGradient id="pl2" x1="0" y1="0" x2="1" y2="1"><stop offset="0" stop-color="#9a5cf2"/><stop offset="1" stop-color="#4a22c2"/></linearGradient>
 </defs>
 <path d="M443.5 145.5Q445 147.5 447.5 146.5" stroke="#4b24c4" stroke-width="3.2" stroke-linecap="round" fill="none"/>
 <path d="M458 136.5Q450 134.5 448.5 143 447.5 152 456 157" stroke="url(#pl2)" stroke-width="5.5" stroke-linecap="round" fill="none"/>
 <path d="M462 158Q457 150 460 141 463 134 470 134 479 135 478.5 146 478 155 469 157" stroke="url(#pl)" stroke-width="7.5" stroke-linecap="round" fill="none"/>
 <path d="M462 157Q467 165 476 165.5" stroke="#5a2ce0" stroke-width="7" stroke-linecap="round" fill="none"/>
 <path d="M474.5 140Q478 145 476 151" stroke="#3b1aa8" stroke-width="2.5" stroke-linecap="round" fill="none" opacity=".7"/>
</svg>

  </div>
 </div>
</div>
<div class="a" style="left:40.8px;top:425.8px;width:121.5px;height:1px;background:#c7c7c7"></div>
<!-- bottom film icons -->
<svg style="left:22.5px;top:448.5px" width="13" height="13" viewBox="0 0 13 13"><g fill="none" stroke="#5f6368" stroke-width="1.5"><rect x="1.2" y="1.2" width="4.1" height="4.1"/><rect x="7.7" y="1.2" width="4.1" height="4.1"/><rect x="1.2" y="7.7" width="4.1" height="4.1"/><rect x="7.7" y="7.7" width="4.1" height="4.1"/></g></svg>
<svg style="left:64px;top:451px" width="7" height="9" viewBox="0 0 7 9"><path d="M5.5 .8L1.7 4.5 5.5 8.2" stroke="#444746" stroke-width="1.5" fill="none"/></svg>
<!-- ===== RULERS ===== -->
<svg style="left:176px;top:88px" width="510" height="330" viewBox="176 88 510 330" id="ruler"><path d="M188.5 104.50H680.6" stroke="#a8abb0" stroke-width="1"/>
<path d="M190.20 104.50V101.00" stroke="#a8abb0" stroke-width="1"/>
<path d="M196.51 104.50V101.00" stroke="#a8abb0" stroke-width="1"/>
<path d="M202.81 104.50V101.00" stroke="#a8abb0" stroke-width="1"/>
<path d="M209.12 104.50V101.00" stroke="#a8abb0" stroke-width="1"/>
<path d="M215.43 104.50V98.50" stroke="#a8abb0" stroke-width="1"/>
<path d="M221.74 104.50V101.00" stroke="#a8abb0" stroke-width="1"/>
<path d="M228.04 104.50V101.00" stroke="#a8abb0" stroke-width="1"/>
<path d="M234.35 104.50V101.00" stroke="#a8abb0" stroke-width="1"/>
<path d="M240.66 104.50V101.00" stroke="#a8abb0" stroke-width="1"/>
<text x="240.66" y="100.3" font-size="8.5" fill="#5f6368" text-anchor="middle" font-family="Liberation Sans">1</text>
<path d="M246.97 104.50V101.00" stroke="#a8abb0" stroke-width="1"/>
<path d="M253.27 104.50V101.00" stroke="#a8abb0" stroke-width="1"/>
<path d="M259.58 104.50V101.00" stroke="#a8abb0" stroke-width="1"/>
<path d="M265.89 104.50V98.50" stroke="#a8abb0" stroke-width="1"/>
<path d="M272.20 104.50V101.00" stroke="#a8abb0" stroke-width="1"/>
<path d="M278.50 104.50V101.00" stroke="#a8abb0" stroke-width="1"/>
<path d="M284.81 104.50V101.00" stroke="#a8abb0" stroke-width="1"/>
<path d="M291.12 104.50V101.00" stroke="#a8abb0" stroke-width="1"/>
<text x="291.12" y="100.3" font-size="8.5" fill="#5f6368" text-anchor="middle" font-family="Liberation Sans">2</text>
<path d="M297.43 104.50V101.00" stroke="#a8abb0" stroke-width="1"/>
<path d="M303.74 104.50V101.00" stroke="#a8abb0" stroke-width="1"/>
<path d="M310.04 104.50V101.00" stroke="#a8abb0" stroke-width="1"/>
<path d="M316.35 104.50V98.50" stroke="#a8abb0" stroke-width="1"/>
<path d="M322.66 104.50V101.00" stroke="#a8abb0" stroke-width="1"/>
<path d="M328.97 104.50V101.00" stroke="#a8abb0" stroke-width="1"/>
<path d="M335.27 104.50V101.00" stroke="#a8abb0" stroke-width="1"/>
<path d="M341.58 104.50V101.00" stroke="#a8abb0" stroke-width="1"/>
<text x="341.58" y="100.3" font-size="8.5" fill="#5f6368" text-anchor="middle" font-family="Liberation Sans">3</text>
<path d="M347.89 104.50V101.00" stroke="#a8abb0" stroke-width="1"/>
<path d="M354.19 104.50V101.00" stroke="#a8abb0" stroke-width="1"/>
<path d="M360.50 104.50V101.00" stroke="#a8abb0" stroke-width="1"/>
<path d="M366.81 104.50V98.50" stroke="#a8abb0" stroke-width="1"/>
<path d="M373.12 104.50V101.00" stroke="#a8abb0" stroke-width="1"/>
<path d="M379.42 104.50V101.00" stroke="#a8abb0" stroke-width="1"/>
<path d="M385.73 104.50V101.00" stroke="#a8abb0" stroke-width="1"/>
<path d="M392.04 104.50V101.00" stroke="#a8abb0" stroke-width="1"/>
<text x="392.04" y="100.3" font-size="8.5" fill="#5f6368" text-anchor="middle" font-family="Liberation Sans">4</text>
<path d="M398.35 104.50V101.00" stroke="#a8abb0" stroke-width="1"/>
<path d="M404.65 104.50V101.00" stroke="#a8abb0" stroke-width="1"/>
<path d="M410.96 104.50V101.00" stroke="#a8abb0" stroke-width="1"/>
<path d="M417.27 104.50V98.50" stroke="#a8abb0" stroke-width="1"/>
<path d="M423.58 104.50V101.00" stroke="#a8abb0" stroke-width="1"/>
<path d="M429.88 104.50V101.00" stroke="#a8abb0" stroke-width="1"/>
<path d="M436.19 104.50V101.00" stroke="#a8abb0" stroke-width="1"/>
<path d="M442.50 104.50V101.00" stroke="#a8abb0" stroke-width="1"/>
<text x="442.50" y="100.3" font-size="8.5" fill="#5f6368" text-anchor="middle" font-family="Liberation Sans">5</text>
<path d="M448.81 104.50V101.00" stroke="#a8abb0" stroke-width="1"/>
<path d="M455.12 104.50V101.00" stroke="#a8abb0" stroke-width="1"/>
<path d="M461.42 104.50V101.00" stroke="#a8abb0" stroke-width="1"/>
<path d="M467.73 104.50V98.50" stroke="#a8abb0" stroke-width="1"/>
<path d="M474.04 104.50V101.00" stroke="#a8abb0" stroke-width="1"/>
<path d="M480.34 104.50V101.00" stroke="#a8abb0" stroke-width="1"/>
<path d="M486.65 104.50V101.00" stroke="#a8abb0" stroke-width="1"/>
<path d="M492.96 104.50V101.00" stroke="#a8abb0" stroke-width="1"/>
<text x="492.96" y="100.3" font-size="8.5" fill="#5f6368" text-anchor="middle" font-family="Liberation Sans">6</text>
<path d="M499.27 104.50V101.00" stroke="#a8abb0" stroke-width="1"/>
<path d="M505.57 104.50V101.00" stroke="#a8abb0" stroke-width="1"/>
<path d="M511.88 104.50V101.00" stroke="#a8abb0" stroke-width="1"/>
<path d="M518.19 104.50V98.50" stroke="#a8abb0" stroke-width="1"/>
<path d="M524.50 104.50V101.00" stroke="#a8abb0" stroke-width="1"/>
<path d="M530.81 104.50V101.00" stroke="#a8abb0" stroke-width="1"/>
<path d="M537.11 104.50V101.00" stroke="#a8abb0" stroke-width="1"/>
<path d="M543.42 104.50V101.00" stroke="#a8abb0" stroke-width="1"/>
<text x="543.42" y="100.3" font-size="8.5" fill="#5f6368" text-anchor="middle" font-family="Liberation Sans">7</text>
<path d="M549.73 104.50V101.00" stroke="#a8abb0" stroke-width="1"/>
<path d="M556.03 104.50V101.00" stroke="#a8abb0" stroke-width="1"/>
<path d="M562.34 104.50V101.00" stroke="#a8abb0" stroke-width="1"/>
<path d="M568.65 104.50V98.50" stroke="#a8abb0" stroke-width="1"/>
<path d="M574.96 104.50V101.00" stroke="#a8abb0" stroke-width="1"/>
<path d="M581.26 104.50V101.00" stroke="#a8abb0" stroke-width="1"/>
<path d="M587.57 104.50V101.00" stroke="#a8abb0" stroke-width="1"/>
<path d="M593.88 104.50V101.00" stroke="#a8abb0" stroke-width="1"/>
<text x="593.88" y="100.3" font-size="8.5" fill="#5f6368" text-anchor="middle" font-family="Liberation Sans">8</text>
<path d="M600.19 104.50V101.00" stroke="#a8abb0" stroke-width="1"/>
<path d="M606.50 104.50V101.00" stroke="#a8abb0" stroke-width="1"/>
<path d="M612.80 104.50V101.00" stroke="#a8abb0" stroke-width="1"/>
<path d="M619.11 104.50V98.50" stroke="#a8abb0" stroke-width="1"/>
<path d="M625.42 104.50V101.00" stroke="#a8abb0" stroke-width="1"/>
<path d="M631.73 104.50V101.00" stroke="#a8abb0" stroke-width="1"/>
<path d="M638.03 104.50V101.00" stroke="#a8abb0" stroke-width="1"/>
<path d="M644.34 104.50V101.00" stroke="#a8abb0" stroke-width="1"/>
<text x="644.34" y="100.3" font-size="8.5" fill="#5f6368" text-anchor="middle" font-family="Liberation Sans">9</text>
<path d="M650.65 104.50V101.00" stroke="#a8abb0" stroke-width="1"/>
<path d="M656.95 104.50V101.00" stroke="#a8abb0" stroke-width="1"/>
<path d="M663.26 104.50V101.00" stroke="#a8abb0" stroke-width="1"/>
<path d="M669.57 104.50V98.50" stroke="#a8abb0" stroke-width="1"/>
<path d="M675.88 104.50V101.00" stroke="#a8abb0" stroke-width="1"/>
<path d="M188.50 117.80H185.00" stroke="#a8abb0" stroke-width="1"/>
<path d="M188.50 124.11H185.00" stroke="#a8abb0" stroke-width="1"/>
<path d="M188.50 130.41H185.00" stroke="#a8abb0" stroke-width="1"/>
<path d="M188.50 136.72H185.00" stroke="#a8abb0" stroke-width="1"/>
<path d="M188.50 143.03H182.50" stroke="#a8abb0" stroke-width="1"/>
<path d="M188.50 149.34H185.00" stroke="#a8abb0" stroke-width="1"/>
<path d="M188.50 155.64H185.00" stroke="#a8abb0" stroke-width="1"/>
<path d="M188.50 161.95H185.00" stroke="#a8abb0" stroke-width="1"/>
<path d="M188.50 168.26H185.00" stroke="#a8abb0" stroke-width="1"/>
<text x="0" y="0" font-size="8.5" fill="#5f6368" text-anchor="middle" font-family="Liberation Sans" transform="translate(182.50 168.26) rotate(-90)">1</text>
<path d="M188.50 174.57H185.00" stroke="#a8abb0" stroke-width="1"/>
<path d="M188.50 180.88H185.00" stroke="#a8abb0" stroke-width="1"/>
<path d="M188.50 187.18H185.00" stroke="#a8abb0" stroke-width="1"/>
<path d="M188.50 193.49H182.50" stroke="#a8abb0" stroke-width="1"/>
<path d="M188.50 199.80H185.00" stroke="#a8abb0" stroke-width="1"/>
<path d="M188.50 206.11H185.00" stroke="#a8abb0" stroke-width="1"/>
<path d="M188.50 212.41H185.00" stroke="#a8abb0" stroke-width="1"/>
<path d="M188.50 218.72H185.00" stroke="#a8abb0" stroke-width="1"/>
<text x="0" y="0" font-size="8.5" fill="#5f6368" text-anchor="middle" font-family="Liberation Sans" transform="translate(182.50 218.72) rotate(-90)">2</text>
<path d="M188.50 225.03H185.00" stroke="#a8abb0" stroke-width="1"/>
<path d="M188.50 231.33H185.00" stroke="#a8abb0" stroke-width="1"/>
<path d="M188.50 237.64H185.00" stroke="#a8abb0" stroke-width="1"/>
<path d="M188.50 243.95H182.50" stroke="#a8abb0" stroke-width="1"/>
<path d="M188.50 250.26H185.00" stroke="#a8abb0" stroke-width="1"/>
<path d="M188.50 256.56H185.00" stroke="#a8abb0" stroke-width="1"/>
<path d="M188.50 262.87H185.00" stroke="#a8abb0" stroke-width="1"/>
<path d="M188.50 269.18H185.00" stroke="#a8abb0" stroke-width="1"/>
<text x="0" y="0" font-size="8.5" fill="#5f6368" text-anchor="middle" font-family="Liberation Sans" transform="translate(182.50 269.18) rotate(-90)">3</text>
<path d="M188.50 275.49H185.00" stroke="#a8abb0" stroke-width="1"/>
<path d="M188.50 281.80H185.00" stroke="#a8abb0" stroke-width="1"/>
<path d="M188.50 288.10H185.00" stroke="#a8abb0" stroke-width="1"/>
<path d="M188.50 294.41H182.50" stroke="#a8abb0" stroke-width="1"/>
<path d="M188.50 300.72H185.00" stroke="#a8abb0" stroke-width="1"/>
<path d="M188.50 307.02H185.00" stroke="#a8abb0" stroke-width="1"/>
<path d="M188.50 313.33H185.00" stroke="#a8abb0" stroke-width="1"/>
<path d="M188.50 319.64H185.00" stroke="#a8abb0" stroke-width="1"/>
<text x="0" y="0" font-size="8.5" fill="#5f6368" text-anchor="middle" font-family="Liberation Sans" transform="translate(182.50 319.64) rotate(-90)">4</text>
<path d="M188.50 325.95H185.00" stroke="#a8abb0" stroke-width="1"/>
<path d="M188.50 332.25H185.00" stroke="#a8abb0" stroke-width="1"/>
<path d="M188.50 338.56H185.00" stroke="#a8abb0" stroke-width="1"/>
<path d="M188.50 344.87H182.50" stroke="#a8abb0" stroke-width="1"/>
<path d="M188.50 351.18H185.00" stroke="#a8abb0" stroke-width="1"/>
<path d="M188.50 357.49H185.00" stroke="#a8abb0" stroke-width="1"/>
<path d="M188.50 363.79H185.00" stroke="#a8abb0" stroke-width="1"/>
<path d="M188.50 370.10H185.00" stroke="#a8abb0" stroke-width="1"/>
<text x="0" y="0" font-size="8.5" fill="#5f6368" text-anchor="middle" font-family="Liberation Sans" transform="translate(182.50 370.10) rotate(-90)">5</text>
<path d="M188.50 376.41H185.00" stroke="#a8abb0" stroke-width="1"/>
<path d="M188.50 382.72H185.00" stroke="#a8abb0" stroke-width="1"/>
<path d="M188.50 389.02H185.00" stroke="#a8abb0" stroke-width="1"/>
<path d="M188.50 395.33H182.50" stroke="#a8abb0" stroke-width="1"/>
<path d="M188.50 401.64H185.00" stroke="#a8abb0" stroke-width="1"/>
<path d="M188.50 407.94H185.00" stroke="#a8abb0" stroke-width="1"/>
<path d="M188.50 105V412.7" stroke="#a8abb0" stroke-width="1"/></svg>
<!-- ===== SLIDE ===== -->
<div class="a" id="slide" style="left:190px;top:117.8px;width:504px;height:283.7px;background:#000;overflow:hidden">
  <div class="a" style="left:273.4px;top:0;width:230.6px;height:283.7px;background:#0e0f11"></div>
<div class="t" style="left:24.5px;top:25.65px;font-size:14.0px;color:#fff;font-weight:bold">Use Cases and Success Stories</div>
<div class="t" style="left:25.2px;top:64.29px;font-size:11.0px;color:#d4d4d4;letter-spacing:-0.17px">Don't just take our word for it!</div>
<div class="t" style="left:50.5px;top:87.09px;font-size:11.0px;color:#d4d4d4;letter-spacing:-0.3px"><b style="color:#fff;letter-spacing:-.45px">[Customer 1]:</b> "[Quote about how the</div>
<div class="a" style="left:32.9px;top:90.1px;width:4.6px;height:4.6px;border-radius:50%;background:#fff"></div>
<div class="t" style="left:50.5px;top:101.39px;font-size:11.0px;color:#d4d4d4;letter-spacing:-0.3px">software helped them overcome a</div>
<div class="t" style="left:50.5px;top:115.89px;font-size:11.0px;color:#d4d4d4;letter-spacing:-0.3px">challenge]" - <i>Achieved [Quantifiable</i></div>
<div class="t" style="left:50.5px;top:129.99px;font-size:11.0px;color:#d4d4d4;letter-spacing:-0.3px"><i>Result]</i></div>
<div class="t" style="left:50.5px;top:144.79px;font-size:11.0px;color:#d4d4d4;letter-spacing:-0.3px"><b style="color:#fff;letter-spacing:-.45px">[Customer 2]:</b> "[Quote about how the</div>
<div class="a" style="left:32.9px;top:147.8px;width:4.6px;height:4.6px;border-radius:50%;background:#fff"></div>
<div class="t" style="left:50.5px;top:159.19px;font-size:11.0px;color:#d4d4d4;letter-spacing:-0.3px">software improved their workflow]"</div>
<div class="t" style="left:75.7px;top:173.89px;font-size:11.0px;color:#d4d4d4;letter-spacing:-0.3px"><i>Increased [Specific Metric] by</i></div>
<div class="a" style="left:57.1px;top:177.0px;width:4.8px;height:4.8px;border-radius:50%;border:1px solid #ddd"></div>
<div class="t" style="left:75.7px;top:188.29px;font-size:11.0px;color:#d4d4d4;letter-spacing:-0.3px"><i>[Percentage]</i></div>
<div class="t" style="left:50.5px;top:202.39px;font-size:11.0px;color:#d4d4d4;letter-spacing:-0.3px"><b style="color:#fff;letter-spacing:-.45px">[Customer 3]:</b> "[Quote highlighting ease</div>
<div class="a" style="left:32.9px;top:205.4px;width:4.6px;height:4.6px;border-radius:50%;background:#fff"></div>
<div class="t" style="left:50.5px;top:216.79px;font-size:11.0px;color:#d4d4d4;letter-spacing:-0.3px">of use and positive impact]" -</div>
<div class="t" style="left:75.7px;top:231.59px;font-size:11.0px;color:#d4d4d4;letter-spacing:-0.3px"><i>Simplified [Complex Process]</i></div>
<div class="a" style="left:57.1px;top:234.7px;width:4.8px;height:4.8px;border-radius:50%;border:1px solid #ddd"></div>
<div class="t" style="left:25.4px;top:254.39px;font-size:11.0px;color:#d4d4d4;letter-spacing:-0.3px">Real users, real results. See the difference</div>
<div class="t" style="left:25.4px;top:268.69px;font-size:11.0px;color:#d4d4d4;letter-spacing:-0.3px">yourself.</div>
<!-- ===== PHOTO ===== -->
<svg style="left:291.9px;top:17.6px" width="193.4" height="248.2" viewBox="481.9 135.4 193.4 248.2">
<defs>
 <clipPath id="pc"><rect x="481.9" y="135.4" width="193.4" height="248.2" rx="6.5"/></clipPath>
 <linearGradient id="wood" x1="0" y1="0" x2="0" y2="1"><stop offset="0" stop-color="#c79f78"/><stop offset=".45" stop-color="#d6b18a"/><stop offset="1" stop-color="#e6cdae"/></linearGradient>
 <linearGradient id="brick" x1="0" y1="0" x2="1" y2="1"><stop offset="0" stop-color="#b8714f"/><stop offset="1" stop-color="#a65f45"/></linearGradient>
 <linearGradient id="win" x1="0" y1="0" x2="0" y2="1"><stop offset="0" stop-color="#f7f8f9"/><stop offset="1" stop-color="#eceeef"/></linearGradient>
 <path id="s5" d="M0 -1L.29 -.4.95 -.31.48 .15.59 .81 0 .5-.59 .81-.48 .15-.95-.31-.29-.4Z"/>
</defs>
<g clip-path="url(#pc)">
 <rect x="481.9" y="135.4" width="193.4" height="248.2" fill="#e3e0dc"/>
 <!-- window -->
 <rect x="481.9" y="135.4" width="100" height="130" fill="url(#win)"/>
 <path d="M496 135.4H503.6V262H496Z" fill="#4f545a"/>
 <path d="M496 135.4H582V147L575 146.4 503.6 139.5Z" fill="#5a5f64"/>
 <path d="M575.2 144H581.9V262H575.2Z" fill="#51565b"/>
 <rect x="581.9" y="135.4" width="16" height="130" fill="#f1f1f0"/>
 <rect x="597.9" y="135.4" width="28" height="130" fill="#d9d3cd"/>
 <rect x="625.9" y="135.4" width="10" height="130" fill="#e7e3de"/>
 <!-- brick -->
 <rect x="635.5" y="135.4" width="40" height="130" fill="url(#brick)"/>
 <g stroke="#d9a187" stroke-width=".6" opacity=".6">
  <path d="M635.5 143H676M635.5 150.5H676M635.5 158H676M635.5 165.5H676M635.5 173H676M635.5 180.5H676M635.5 188H676M635.5 195.5H676M635.5 203H676M635.5 210.5H676M635.5 218H676M635.5 225.5H676M635.5 233H676M635.5 240.5H676"/>
 </g>
 <path d="M647.6 213.4H676V265H647.6Z" fill="#f2f2f3"/>
 <!-- widgets -->
 <rect x="484.8" y="197.3" width="22" height="16" rx="2" fill="none" stroke="#d6d8da" stroke-width=".6"/>
 <circle cx="491" cy="205.3" r="3.5" fill="#c8cacc"/>
 <circle cx="573" cy="184.6" r="10" fill="none" stroke="#cfd2d5" stroke-width=".6"/>
 <path d="M570 180V189L576.5 184.5Z" fill="#2a6cb8"/>
 <rect x="599.3" y="173.2" width="29.5" height="22.8" rx="2" fill="none" stroke="#d0d3d6" stroke-width=".6"/>
 <g fill="#2f74c0"><rect x="606" y="184" width="3.6" height="6.6"/><rect x="611" y="181" width="3.6" height="9.6"/><rect x="616.2" y="178.6" width="3.6" height="12"/></g>
 <!-- behind people zone -->
 <rect x="503" y="250" width="133" height="60" fill="#d8d6d3"/>
 <!-- blue man -->
 <path d="M500 310C500 250 503 240 516 237.5 526 234 536 234 546 237.5 556 240 558 252 560 310Z" fill="#3f5a7b"/>
 <path d="M523 236L530.5 246 538 236Z" fill="#5c7595"/>
 <path d="M524 226H537V238H524Z" fill="#5e3f2d"/>
 <ellipse cx="530.3" cy="216" rx="10.2" ry="13.5" fill="#6d4a35"/>
 <path d="M520 211Q520 201.4 530.3 201.4 540.6 201.4 540.6 211Q536 206 530.3 206 524.5 206 520 211Z" fill="#1b1614"/>
 <path d="M522 213.5H538.5" stroke="#1e1e1e" stroke-width=".7" opacity=".8"/>
 <path d="M523 223Q530 231 538 223" stroke="#2a1e18" stroke-width="3" fill="none"/>
 <path d="M525 222.5Q530.5 226 536 222.5" stroke="#f2f2f2" stroke-width="1.6" fill="none"/>
 <ellipse cx="512" cy="262" rx="4" ry="5" fill="#6d4a35"/>
 <ellipse cx="547" cy="262" rx="4" ry="5" fill="#6d4a35"/>
 <!-- orange woman -->
 <path d="M590 320C589 262 592 245 604 239.5 612 237 622 237 630 240 637 246 638 262 638 320Z" fill="#bd5428"/>
 <path d="M597 241L571 222 565 214 570 210 578 216 603 236Z" fill="#c0582b"/>
 <ellipse cx="559" cy="207" rx="4.2" ry="6" fill="#7f5239" transform="rotate(-25 559 207)"/>
 <path d="M595 279H623V310H595Z" fill="#1e1d20"/>
 <ellipse cx="617" cy="222" rx="19" ry="17" fill="#2a1e19"/>
 <ellipse cx="612" cy="224" rx="9.5" ry="11.5" fill="#8a5a3d"/>
 <path d="M604 220.5H619" stroke="#2a2a2a" stroke-width=".7" opacity=".8"/>
 <path d="M606.5 228.5Q612 232 617 228.5" stroke="#f2f2f2" stroke-width="1.6" fill="none"/>
 <ellipse cx="613" cy="263" rx="5" ry="4" fill="#8a5a3d"/>
 <!-- right woman -->
 <path d="M652 300C652 272 656 268 676 266V300Z" fill="#f3f3f3"/>
 <ellipse cx="667" cy="246" rx="12" ry="15" fill="#2b211d"/>
 <ellipse cx="660" cy="253" rx="8" ry="12" fill="#e4b797"/>
 <!-- left man -->
 <path d="M476 330C476 282 482 268 494 266 504 264 516 270 524 280 532 292 537 305 537 330Z" fill="#d9d1c7"/>
 <path d="M487 266L497 282 505 266Z" fill="#f3f1ee"/>
 <ellipse cx="497" cy="253" rx="12.5" ry="18" fill="#d7a585"/>
 <path d="M485 247Q485 234.9 497.5 234.9 509 234.9 509.5 246Q505 240 497 240 490 240 485 247Z" fill="#4b3528"/>
 <path d="M488 262Q497 273 506 262" stroke="#5e4232" stroke-width="3.5" fill="none"/>
 <path d="M491 262Q497 266 503 262" stroke="#fbfbfb" stroke-width="1.7" fill="none"/>
 <ellipse cx="519" cy="312" rx="9" ry="5" fill="#d29c7c"/>
 <!-- table -->
 <path d="M481.9 308L560 305 676 312V383.6H481.9Z" fill="url(#wood)"/>
 <path d="M481.9 330L676 322V326L481.9 336Z" fill="#e2c7a6" opacity=".6"/>
 <path d="M481.9 352L676 340V345L481.9 360Z" fill="#ecd8bf" opacity=".55"/>
 <path d="M481.9 372L676 360V364L481.9 378Z" fill="#e9d3b8" opacity=".5"/>
 <!-- center monitor -->
 <rect x="530.4" y="258.2" width="66.2" height="47.2" rx="1" fill="#1d232c"/>
 <rect x="533" y="260.8" width="61" height="42" fill="#27303c"/>
 <g fill="#8fa0b0" opacity=".6"><rect x="535" y="264" width="8" height="1"/><rect x="535" y="267" width="7" height="1"/><rect x="535" y="270" width="8" height="1"/><rect x="535" y="273" width="6" height="1"/><rect x="535" y="276" width="8" height="1"/><rect x="585" y="264" width="7" height="1"/><rect x="585" y="267" width="7" height="1"/><rect x="585" y="270" width="7" height="1"/><rect x="548" y="292" width="9" height="1"/><rect x="560" y="292" width="9" height="1"/><rect x="572" y="292" width="9" height="1"/><rect x="548" y="295" width="9" height="1"/><rect x="560" y="295" width="9" height="1"/></g>
 <g fill="#4fb3ea"><rect x="546" y="281" width="2.6" height="6"/><rect x="549.8" y="283" width="2.6" height="4"/><rect x="553.6" y="279" width="2.6" height="8"/><rect x="557.4" y="281" width="2.6" height="6"/><rect x="561.2" y="280" width="2.6" height="7"/><rect x="565" y="278" width="2.6" height="9"/><rect x="568.8" y="275" width="2.6" height="12"/><rect x="572.6" y="276" width="2.6" height="11"/><rect x="576.4" y="273" width="2.6" height="14"/><rect x="580.2" y="270" width="2.6" height="17"/></g>
 <path d="M546 279L556 275 563 277 570 271 576 273 583 266" stroke="#d4824a" stroke-width="1" fill="none"/>
 <rect x="553.7" y="305" width="10.8" height="11" fill="#202327"/>
 <path d="M544.3 315.3H579.2L577 320H546Z" fill="#26292e"/>
 <!-- keyboard -->
 <path d="M536.3 326L590 319 592.6 325 539 333.3Z" fill="#25282e"/>
 <path d="M582 324Q596 320 611 323L611 332 586 333Z" fill="#cf9a79"/>
 <!-- small monitor -->
 <rect x="636.3" y="261.7" width="19.3" height="21.5" fill="#222a35"/>
 <!-- left monitor -->
 <rect x="478" y="272.4" width="26.7" height="64.4" rx="1" fill="#1d232c"/>
 <rect x="481" y="275" width="21" height="59" fill="#26303c"/>
 <g fill="#5ab8ec"><rect x="484" y="295" width="2.5" height="8"/><rect x="487.5" y="291" width="2.5" height="12"/><rect x="491" y="293" width="2.5" height="10"/><rect x="494.5" y="288" width="2.5" height="15"/><rect x="498" y="284" width="2.5" height="19"/></g>
 <path d="M483 287L490 283 496 285 502 279" stroke="#5aa0d0" stroke-width=".9" fill="none"/>
 <g fill="#4a8fd0" opacity=".8"><rect x="484" y="310" width="6" height="6"/><rect x="492" y="310" width="8" height="1.2"/><rect x="492" y="313" width="8" height="1.2"/><rect x="484" y="319" width="14" height="1.2"/></g>
 <!-- coffee -->
 <path d="M507 325H521L519.5 344.8H508.5Z" fill="#b98a63"/>
 <rect x="506" y="322" width="15.6" height="4.5" rx="1.5" fill="#2b2826"/>
 <!-- right monitor -->
 <rect x="612.7" y="281.8" width="64" height="67" rx="1.2" fill="#1b2029"/>
 <rect x="615.5" y="284.5" width="60" height="61" fill="#26303b"/>
 <g fill="#8fa0b0" opacity=".55"><rect x="619" y="290" width="9" height="1.1"/><rect x="619" y="294" width="8" height="1.1"/><rect x="619" y="298" width="9" height="1.1"/><rect x="619" y="302" width="7" height="1.1"/><rect x="619" y="306" width="9" height="1.1"/><rect x="619" y="310" width="8" height="1.1"/><rect x="619" y="314" width="9" height="1.1"/><rect x="632" y="330" width="8" height="1.1"/><rect x="644" y="330" width="8" height="1.1"/><rect x="632" y="334" width="8" height="1.1"/><rect x="644" y="334" width="8" height="1.1"/><rect x="632" y="338" width="8" height="1.1"/></g>
 <g fill="#d4824a" opacity=".8"><rect x="662" y="330" width="8" height="1.3"/><rect x="662" y="334" width="8" height="1.3"/><rect x="662" y="338" width="8" height="1.3"/></g>
 <g fill="#6cc4ef"><rect x="637" y="313" width="4" height="10"/><rect x="642.5" y="316" width="4" height="7"/><rect x="648" y="309" width="4" height="14"/><rect x="653.5" y="311" width="4" height="12"/><rect x="659" y="309" width="4" height="14"/><rect x="664.5" y="306" width="4" height="17"/><rect x="670" y="303" width="4" height="20"/></g>
 <path d="M636 311L648 303 656 306 666 299 676 296" stroke="#d67a40" stroke-width="1.3" fill="none"/>
 <path d="M636 316L648 310 658 312 676 303" stroke="#4a9ad8" stroke-width="1" fill="none"/>
 <rect x="640.9" y="348.8" width="14.7" height="12" fill="#22252a"/>
 <path d="M629 358.2H676V374.3H625Z" fill="#25282d"/>
 <!-- papers -->
 <path d="M541.7 367L589 358.2 598 370 551 380Z" fill="#eef1f5"/>
 <ellipse cx="572" cy="368" rx="9" ry="3.2" fill="#7db2dc" transform="rotate(-10 572 368)"/>
 <path d="M605 338L640 333 643 340 610 345Z" fill="#e6ecf2" opacity=".9"/>
 <path d="M481.9 369L518 365 523 378 481.9 383.6Z" fill="#dbc8b3"/>
 <path d="M485 382L523 377.5" stroke="#6a5646" stroke-width="1.5"/>
 <!-- stars -->
 <g fill="#f0a23c">
  <use href="#s5" transform="translate(522.9 175.9) scale(4)"/>
  <use href="#s5" transform="translate(550.4 175.9) scale(3.8)"/>
  <use href="#s5" transform="translate(553.7 218.3) scale(4.8)"/>
  <use href="#s5" transform="translate(545.7 199.5) scale(3.2)"/>
  <use href="#s5" transform="translate(536.3 191.4) scale(3)"/>
  <use href="#s5" transform="translate(504.7 190.1) scale(3)"/>
  <use href="#s5" transform="translate(514.9 202.2) scale(2.6)"/>
  <use href="#s5" transform="translate(490.2 218.3) scale(2.8)"/>
  <use href="#s5" transform="translate(517 229.5) scale(3)"/>
  <use href="#s5" transform="translate(530.4 158) scale(2.4)"/>
  <use href="#s5" transform="translate(591.3 225.5) scale(2.2)"/>
  <use href="#s5" transform="translate(580 249.6) scale(2.8)"/>
  <use href="#s5" transform="translate(630 163.8) scale(2.4)"/>
 </g>
 <g fill="#f2c24a"><use href="#s5" transform="translate(579.7 215.6) scale(3.8)"/><use href="#s5" transform="translate(638.2 157.7) scale(3.6)"/><use href="#s5" transform="translate(521 360) scale(0)"/></g>
 <g fill="#2e9f78"><use href="#s5" transform="translate(542.2 159) scale(4.6)"/></g>
 <g fill="#3c9ae8">
  <use href="#s5" transform="translate(568.5 166.5) scale(3.6)"/>
  <use href="#s5" transform="translate(496.6 182.6) scale(3.6)"/>
  <use href="#s5" transform="translate(516.7 240.2) scale(3.8)"/>
  <use href="#s5" transform="translate(615.4 249.6) scale(6)"/>
  <use href="#s5" transform="translate(514.3 162.5) scale(1.8)"/>
  <use href="#s5" transform="translate(519 287) scale(3.6)"/>
 </g>
 <g fill="#ffffff" opacity=".85"><use href="#s5" transform="translate(603.3 159.8) scale(2.8)"/><use href="#s5" transform="translate(579.7 151.2) scale(3)"/></g>
 <g fill="#f0a23c"><use href="#s5" transform="translate(642.5 270.5) scale(2.8)"/></g>
</g>
</svg>
<!-- purple logo -->
<svg style="left:251px;top:13.2px" width="42" height="40" viewBox="441 131 42 40">
 <defs>
  <linearGradient id="pl" x1="0" y1="0" x2="1" y2="1"><stop offset="0" stop-color="#8d52f7"/><stop offset=".5" stop-color="#6936ee"/><stop offset="1" stop-color="#4320c4"/></linearGradient>
  <linearGradient id="pl2" x1="0" y1="0" x2="1" y2="1"><stop offset="0" stop-color="#9a5cf2"/><stop offset="1" stop-color="#4a22c2"/></linearGradient>
 </defs>
 <path d="M443.5 145.5Q445 147.5 447.5 146.5" stroke="#4b24c4" stroke-width="3.2" stroke-linecap="round" fill="none"/>
 <path d="M458 136.5Q450 134.5 448.5 143 447.5 152 456 157" stroke="url(#pl2)" stroke-width="5.5" stroke-linecap="round" fill="none"/>
 <path d="M462 158Q457 150 460 141 463 134 470 134 479 135 478.5 146 478 155 469 157" stroke="url(#pl)" stroke-width="7.5" stroke-linecap="round" fill="none"/>
 <path d="M462 157Q467 165 476 165.5" stroke="#5a2ce0" stroke-width="7" stroke-linecap="round" fill="none"/>
 <path d="M474.5 140Q478 145 476 151" stroke="#3b1aa8" stroke-width="2.5" stroke-linecap="round" fill="none" opacity=".7"/>
</svg>
</div>
<!-- notes -->
<div class="a" style="left:416px;top:416px;width:38px;height:1.6px;background:#8d8d8d"></div>
<div class="a" style="left:189px;top:433.5px;width:492px;height:38px;background:#eef1f6;border-radius:6px"></div>
<div class="a" style="left:201.5px;top:443px;width:1.6px;height:14.3px;background:#111"></div>
<!-- ===== SIDE PANEL ===== -->
<div class="a" style="left:694px;top:50.6px;width:266px;height:421.2px;background:#eff2f6;border-radius:13px"></div>
<div class="t" id="pt" style="left:707.5px;top:67.2px;font-size:13.2px;color:#4a4f57;-webkit-text-stroke:.3px #4a4f57">Edit Slides With SlidesAI</div>
<svg style="left:931.5px;top:67.5px" width="12.5" height="12.5" viewBox="0 0 12 12"><path d="M1 1L11 11M11 1L1 11" stroke="#3c4043" stroke-width="1.6" stroke-linecap="round"/></svg>
<div class="a" style="left:707px;top:95.7px;width:239.8px;height:363.3px;background:#f8f9fb;border-radius:10px"></div>
<div class="a" style="left:717.3px;top:102.2px;width:25.2px;height:25px;border:1px solid #e3e6ea;border-radius:5px;background:#fafbfc"></div>
<svg style="left:723.5px;top:108.5px" width="13" height="13" viewBox="0 0 13 13"><path d="M11.5 6.5H1.8M6 2.2L1.7 6.5 6 10.8" stroke="#4b5563" stroke-width="1.5" fill="none" stroke-linecap="round" stroke-linejoin="round"/></svg>
<div class="t" id="cl" style="left:755.9px;top:109.4px;font-size:11.6px;font-weight:bold;color:#1f2937;letter-spacing:-.3px">Choose Layout</div>
<div class="t" style="left:873.7px;top:109.7px;font-size:11.6px;color:#6b7280">English</div>
<svg style="left:918.5px;top:112.5px" width="9" height="6" viewBox="0 0 9 6"><path d="M1 1L4.5 4.6 8 1" stroke="#6b7280" stroke-width="1.3" fill="none" stroke-linecap="round" stroke-linejoin="round"/></svg>
<!-- scroll area -->
<div class="a" style="left:707px;top:134px;width:239.8px;height:266.2px;overflow:hidden">
 <div class="t" style="left:13.1px;top:17px;font-size:12px;color:#4b5563">Choose Theme</div>
 <div class="a" style="left:13.6px;top:32.4px;width:214px;height:40px;border:1px solid #e3e6ea;border-radius:6px;background:#fafbfc;clip-path:inset(0 0 10px 0)"></div>
 <svg style="left:19.8px;top:39px" width="38.3" height="23.1" viewBox="0 0 38.3 23.1">
  <defs><clipPath id="thc"><rect width="38.3" height="30" rx="2.5"/></clipPath></defs>
  <g clip-path="url(#thc)">
  <rect width="38.3" height="23.1" fill="#1d2331"/>
  <rect x="0" y="0" width="16.5" height="11" fill="#2e3557"/>
  <rect x="0.5" y="3" width="12.5" height="1.5" fill="#dfe2ea"/><rect x="0.5" y="6.2" width="11.5" height="1.5" fill="#dfe2ea"/>
  <rect x="0" y="11" width="16.5" height="12.1" fill="#8fa3b8"/>
  <rect x="0" y="11" width="5" height="4" fill="#6b3f2a"/>
  <rect x="9" y="11" width="6" height="5" fill="#c8c6c0"/>
  <ellipse cx="6" cy="17.5" rx="4" ry="2.5" fill="#7a5a48"/>
  <rect x="2" y="19" width="13" height="4" fill="#b9c7d4"/>
  <rect x="28" y="11.5" width="10" height="1.2" fill="#5d6a80"/><rect x="28" y="14" width="10" height="1" fill="#4f5b70"/><rect x="28" y="16" width="8" height="1" fill="#4f5b70"/>
  </g>
 </svg>
 <div class="t" style="left:68px;top:46.8px;font-size:12px;color:#111827">Midnight Directive</div>
 <svg style="left:205px;top:45.5px" width="8" height="11.5" viewBox="0 0 8 11.5"><path d="M1 4L4 1 7 4M1 7.5L4 10.5 7 7.5" stroke="#6b7280" stroke-width="1.1" fill="none" stroke-linecap="round" stroke-linejoin="round"/></svg>
 <div class="a" style="left:101.6px;top:64px;width:24.6px;height:3px;border-radius:2px;background:#d4d7dc"></div>
 <div class="a" style="left:9.1px;top:70.7px;width:92.5px;height:25.5px;border:2.4px solid #1735e0;border-radius:2px"></div>
 <div class="t" style="left:13.1px;top:77.9px;font-size:12px;color:#4b5563">Choose Layout</div>
 <div class="a" style="left:13.6px;top:97.5px;width:226px;height:29.5px;border:1px solid #e3e6ea;border-radius:6px;background:#fafbfc"></div>
 <div class="t" style="left:26.5px;top:106.6px;font-size:12px;color:#374151">All Layouts</div>
 <svg style="left:217.8px;top:106.5px" width="8" height="11.5" viewBox="0 0 8 11.5"><path d="M1 4L4 1 7 4M1 7.5L4 10.5 7 7.5" stroke="#6b7280" stroke-width="1.1" fill="none" stroke-linecap="round" stroke-linejoin="round"/></svg>
 <!-- blue card -->
 <div class="a" style="left:13.5px;top:127.4px;width:226.1px;height:150px;background:#3b82f6;border-radius:8px"></div>
 <div class="t" id="sbp" style="left:23.8px;top:136.4px;font-size:10.6px;letter-spacing:-.2px;color:#fff;-webkit-text-stroke:.35px #fff">Slide With Bullet Points v1</div>
 <div class="a" style="left:15.8px;top:153px;width:221.5px;height:113.5px;background:#333a5b;overflow:hidden">
  <div class="t" style="left:11.2px;top:9.8px;font-size:5.8px;color:#fff;font-weight:bold;letter-spacing:-.15px">Slide With Bullet Points v1</div>
  <div class="a" style="left:0;top:0;width:256px;height:227px;transform:scale(.5);transform-origin:0 0">
   <div class="t" style="left:22.4px;top:52.8px;font-size:6.7px;color:#c3c7d6">This slide is focused on listing the main insights or takeaways.</div>
   <div class="a" style="left:33.0px;top:72.8px;width:3px;height:3px;border-radius:50%;background:#d0d3de"></div>
   <div class="t" style="left:44.4px;top:70.4px;font-size:6.7px;color:#c3c7d6">Completion of the project's initial phase within the first six</div>
   <div class="t" style="left:44.4px;top:79.6px;font-size:6.7px;color:#c3c7d6">months.</div>
   <div class="a" style="left:33.0px;top:98.0px;width:3px;height:3px;border-radius:50%;background:#d0d3de"></div>
   <div class="t" style="left:44.4px;top:95.6px;font-size:6.7px;color:#c3c7d6">Development and launch of the program or initiative by the</div>
   <div class="t" style="left:44.4px;top:104.8px;font-size:6.7px;color:#c3c7d6">project's end.</div>
   <div class="a" style="left:33.0px;top:123.2px;width:3px;height:3px;border-radius:50%;background:#d0d3de"></div>
   <div class="t" style="left:44.4px;top:120.8px;font-size:6.7px;color:#c3c7d6">Achievement of predefined success metrics, such as target</div>
   <div class="t" style="left:44.4px;top:130.0px;font-size:6.7px;color:#c3c7d6">user engagement or service delivery.</div>
  </div>
  <svg style="left:127.9px;top:0" width="93.6" height="113.5" viewBox="0 0 93.6 113.5">
   <defs><pattern id="st" width="10" height="10" patternUnits="userSpaceOnUse" patternTransform="rotate(-45)"><rect width="5" height="10" fill="#3b4366"/></pattern></defs>
   <rect width="93.6" height="113.5" fill="#2e3555"/>
   <rect width="93.6" height="113.5" fill="url(#st)" opacity=".7"/>
   <rect x="0" y="0" width="77.5" height="104.4" fill="#e7e4df"/>
   <path d="M4 4H72V59H4Z" fill="none" stroke="#f3f1ed" stroke-width="1.5"/>
   <path d="M4.8 4.8H72.8V59.8" fill="none" stroke="#d6d2cc" stroke-width=".6"/>
   <path d="M4 81H72V104" fill="none" stroke="#f3f1ed" stroke-width="1.5"/>
   <rect x="9.9" y="37.1" width="13.9" height="19.1" fill="#f4f5f7" stroke="#d8d8d8" stroke-width=".4"/>
   <rect x="26.8" y="37.1" width="14.3" height="20.3" fill="#f4f5f7" stroke="#d8d8d8" stroke-width=".4"/>
   <rect x="44.1" y="37.6" width="13.6" height="19.8" fill="#f4f5f7" stroke="#d8d8d8" stroke-width=".4"/>
   <rect x="44" y="58.6" width="14" height="21" fill="#eef0f3" stroke="#d8d8d8" stroke-width=".4"/>
   <path d="M12 42H20M12 45H18M29 41H38M29 44H36M46 42H52" stroke="#a9adb3" stroke-width=".5"/>
   <rect x="51.3" y="41" width="3.5" height="3" fill="#f2d35a"/>
   <path d="M4.5 93C3 78 5 66 14 62L34 62 50 52 53 46 58 47 57 53 42 68 39 75 39 93Z" fill="#b5cbe0"/>
   <path d="M14 62L34 62 38 68 12 70Z" fill="#a7bfd6"/>
   <ellipse cx="19.3" cy="52.5" rx="7.5" ry="7.8" fill="#2c211c"/>
   <path d="M14 58Q11 63 12 66" stroke="#3a2a22" stroke-width="3" fill="none" stroke-linecap="round"/>
   <path d="M12 91H37V104.4H12Z" fill="#1c1c1f"/>
  </svg>
  <svg style="left:77px;top:63px" width="13" height="16" viewBox="0 0 13 16"><path d="M4 7V2.2A1.2 1.2 0 0 1 6.4 2.2V7.5 5.8A1.2 1.2 0 0 1 8.6 5.8V7.6 6.6A1.2 1.2 0 0 1 10.8 6.6V10.5Q10.8 15 7 15 4.5 15 3 12.5L1 9Q.6 7.8 1.8 7.8L4 10Z" fill="#fff" stroke="#222" stroke-width=".8" stroke-linejoin="round"/></svg>
 </div>
</div>
<div class="a" style="left:943.5px;top:399px;width:3.1px;height:3.5px;background:#3b82f6;border-radius:0 0 3px 0"></div>
<!-- Edit slide button -->
<div class="a" style="left:719.9px;top:413.7px;width:214.3px;height:32.6px;background:#3b82f6;border-radius:5px"></div>
<div class="t" id="es" style="left:791.5px;top:424.6px;font-size:11.6px;color:#fff;-webkit-text-stroke:.3px #fff">Edit Slide</div>
<svg style="left:854px;top:425.5px" width="12" height="10" viewBox="0 0 12 10"><path d="M1 5H10.5M6.5 1L10.5 5 6.5 9" stroke="#dbe8fd" stroke-width="1.2" fill="none" stroke-linecap="round" stroke-linejoin="round"/></svg>
<!-- annotation arrow -->
<svg style="left:618px;top:427px" width="100" height="12" viewBox="0 0 100 12"><path d="M1.8 5.2L2 6.4 88 6.8 88 5.6Z" fill="#1432e6" stroke="#1432e6" stroke-width="1.2" stroke-linejoin="round"/><path d="M85.5 1.8L97.5 6.4 85.5 11 87.5 6.3Z" fill="#1432e6"/></svg>
<!-- right sidebar -->
<div class="a" style="left:973px;top:204.8px;width:38px;height:154px;background:#eff2f6;border-radius:19px"></div>
<svg style="left:985px;top:223px" width="13" height="12" viewBox="0 0 13 12"><rect x="1" y="1.8" width="11" height="8.4" rx="1" fill="none" stroke="#5f6368" stroke-width="1.4"/><path d="M3.5 4.8H7.2M3.5 7.2H7.2M9.3 4V8" stroke="#5f6368" stroke-width="1.3"/></svg>
<svg style="left:984.5px;top:257px" width="14" height="14" viewBox="0 0 14 14"><rect x="4" y="1" width="9" height="9" rx="1" fill="none" stroke="#5f6368" stroke-width="1.4"/><circle cx="8.5" cy="5.5" r="1.8" fill="none" stroke="#5f6368" stroke-width="1.2"/><path d="M1.5 4.5V12.5H9.5" stroke="#5f6368" stroke-width="1.4" fill="none"/></svg>
<svg style="left:984.5px;top:293px" width="14" height="14" viewBox="0 0 14 14"><path d="M6 2H2V12.5H12.5V8" stroke="#5f6368" stroke-width="1.4" fill="none"/><circle cx="9.5" cy="4.2" r="2.3" fill="none" stroke="#5f6368" stroke-width="1.3"/><path d="M11.2 5.9L13 7.7" stroke="#5f6368" stroke-width="1.3"/><path d="M3.5 11L6 8 8 10 9.5 8.5 11 11Z" fill="#5f6368"/></svg>
<svg style="left:984.5px;top:329px" width="14" height="12" viewBox="0 0 14 12"><path d="M1 1.5H5.5L7 3H13V11H1Z" stroke="#5f6368" stroke-width="1.4" fill="none" stroke-linejoin="round"/><path d="M1 4.5H13" stroke="#5f6368" stroke-width="1.2"/></svg>
<!-- collapse button -->
<div class="a" style="left:1004px;top:426px;width:33.6px;height:33.6px;border-radius:50%;background:#fbfcfd;box-shadow:0 1px 2.5px rgba(0,0,0,.28)"></div>
<svg style="left:1012.5px;top:438.5px" width="7" height="10" viewBox="0 0 7 10"><path d="M5.5 1L1.5 5 5.5 9" stroke="#5f6368" stroke-width="1.6" fill="none" stroke-linecap="round" stroke-linejoin="round"/></svg>
</body></html>
